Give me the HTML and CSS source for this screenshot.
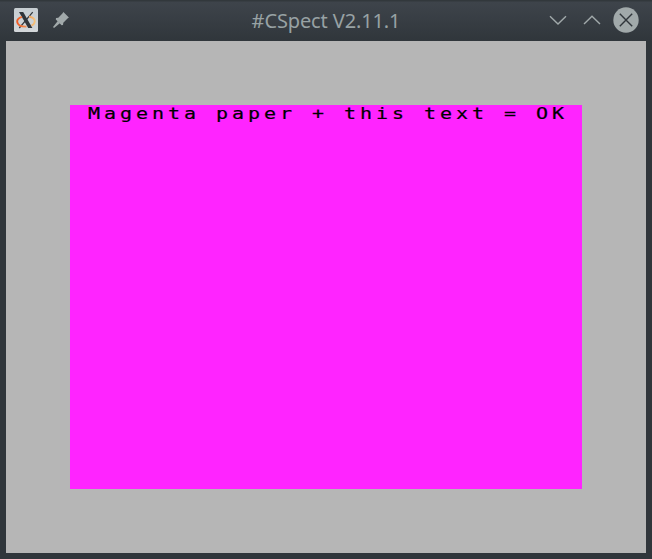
FILE: index.html
```html
<!DOCTYPE html>
<html lang="en">
<head>
<meta charset="utf-8">
<title>#CSpect V2.11.1</title>
<link rel="stylesheet" href="styles.css">
</head>
<body>
<div class="window">
  <header class="titlebar">
    <div class="side">
      <svg class="app-icon" viewBox="0 0 24 24">
        <defs>
          <linearGradient id="ring" x1="0" x2="1"><stop offset="0" stop-color="#f05a24"/><stop offset="1" stop-color="#f4c27a"/></linearGradient>
          <linearGradient id="tile" x1="0" y1="0" x2="0" y2="1"><stop offset="0" stop-color="#c6cdd1"/><stop offset="1" stop-color="#d3d7da"/></linearGradient>
        </defs>
        <rect width="24" height="24" rx="1.5" fill="url(#tile)"/>
        <path d="M18.7 4.2 5.3 20" stroke="#30353a" stroke-width="1.2"/>
        <path d="M5 4h4.2l9.2 16h-4.2z" fill="#30353a"/>
        <path d="M8 8.9C4.500 10 3 12 3.200 13.800 3.600 17 7.500 18.700 12.500 18.600M15 8.500C19 9.300 21 11.300 20.800 13.500 20.600 15.600 19 17 17.500 17.600" fill="none" stroke="url(#ring)" stroke-width="1.9"/>
      </svg>
      <svg class="pin" viewBox="0 0 18 18" fill="#a1a9aa">
        <path d="M11.4 1.1 16.9 6.6 15.5 7.6 11.3 11.7 11 14 9.6 14.2 3.8 8.4 4 7 6.3 6.7 10.4 2.5z"/>
        <path d="M5.8 10.1 7.9 12.2 2 17 1 16z"/>
      </svg>
    </div>
    <h1 class="title">#CSpect V2.11.1</h1>
    <div class="side controls">
      <svg class="chevron" viewBox="0 0 18 10"><path d="M1 1.2 9 9l8-7.8"/></svg>
      <svg class="chevron up" viewBox="0 0 18 10"><path d="M1 9 9 1.2 17 9"/></svg>
      <svg class="close" viewBox="0 0 26 26"><circle cx="13" cy="13" r="12.7"/><path d="m6.8 6.8 12.4 12.4M19.2 6.800 6.800 19.2"/></svg>
    </div>
  </header>
  <main class="border">
    <div class="screen"><span class="line">Magenta paper + this text = OK</span></div>
  </main>
</div>
</body>
</html>
```
FILE: styles.css
```css
* { box-sizing: border-box; }
body { margin: 0; }
.window {
  width: 652px;
  height: 559px;
  padding: 0 6px 6px;
  overflow: hidden;
  background: linear-gradient(#32383c 0 1px, #3e444b 2px, #30363b 41px, #30363b);
}
.titlebar {
  display: grid;
  grid-template-columns: 120px 1fr 120px;
  align-items: center;
  height: 41px;
}
.side { display: flex; align-items: center; padding: 0 0 2px 8px; }
.app-icon { width: 24px; height: 24px; }
.pin { width: 18px; height: 18px; margin-left: 14px; }
.title {
  margin: 0;
  color: #98a2a4;
  font: 400 20px/41px "Noto Sans", sans-serif;
  letter-spacing: -0.12px;
  text-align: center;
  white-space: nowrap;
}
.controls { justify-content: flex-end; gap: 16px; padding: 0 7px 2px 0; }
.chevron { width: 18px; height: 10px; fill: none; stroke: #a1a9aa; stroke-width: 1.4; }
.close { width: 26px; height: 26px; margin-left: -4px; }
.close circle { fill: #a1a9aa; }
.close path { stroke: #30363b; stroke-width: 1.4; }
.border {
  width: 640px;
  height: 512px;
  padding: 64px;
  background: #b6b6b6;
}
.screen {
  width: 512px;
  height: 384px;
  padding: 1px 0 0 18px;
  background: #ff24ff;
}
.line {
  display: block;
  width: 390px;
  color: #000;
  font: 400 16px/16px "DejaVu Sans Mono", monospace;
  letter-spacing: 3.168px;
  white-space: pre;
  transform: scaleX(1.25);
  transform-origin: left top;
  -webkit-text-stroke: 0.2px #000;
}
```
